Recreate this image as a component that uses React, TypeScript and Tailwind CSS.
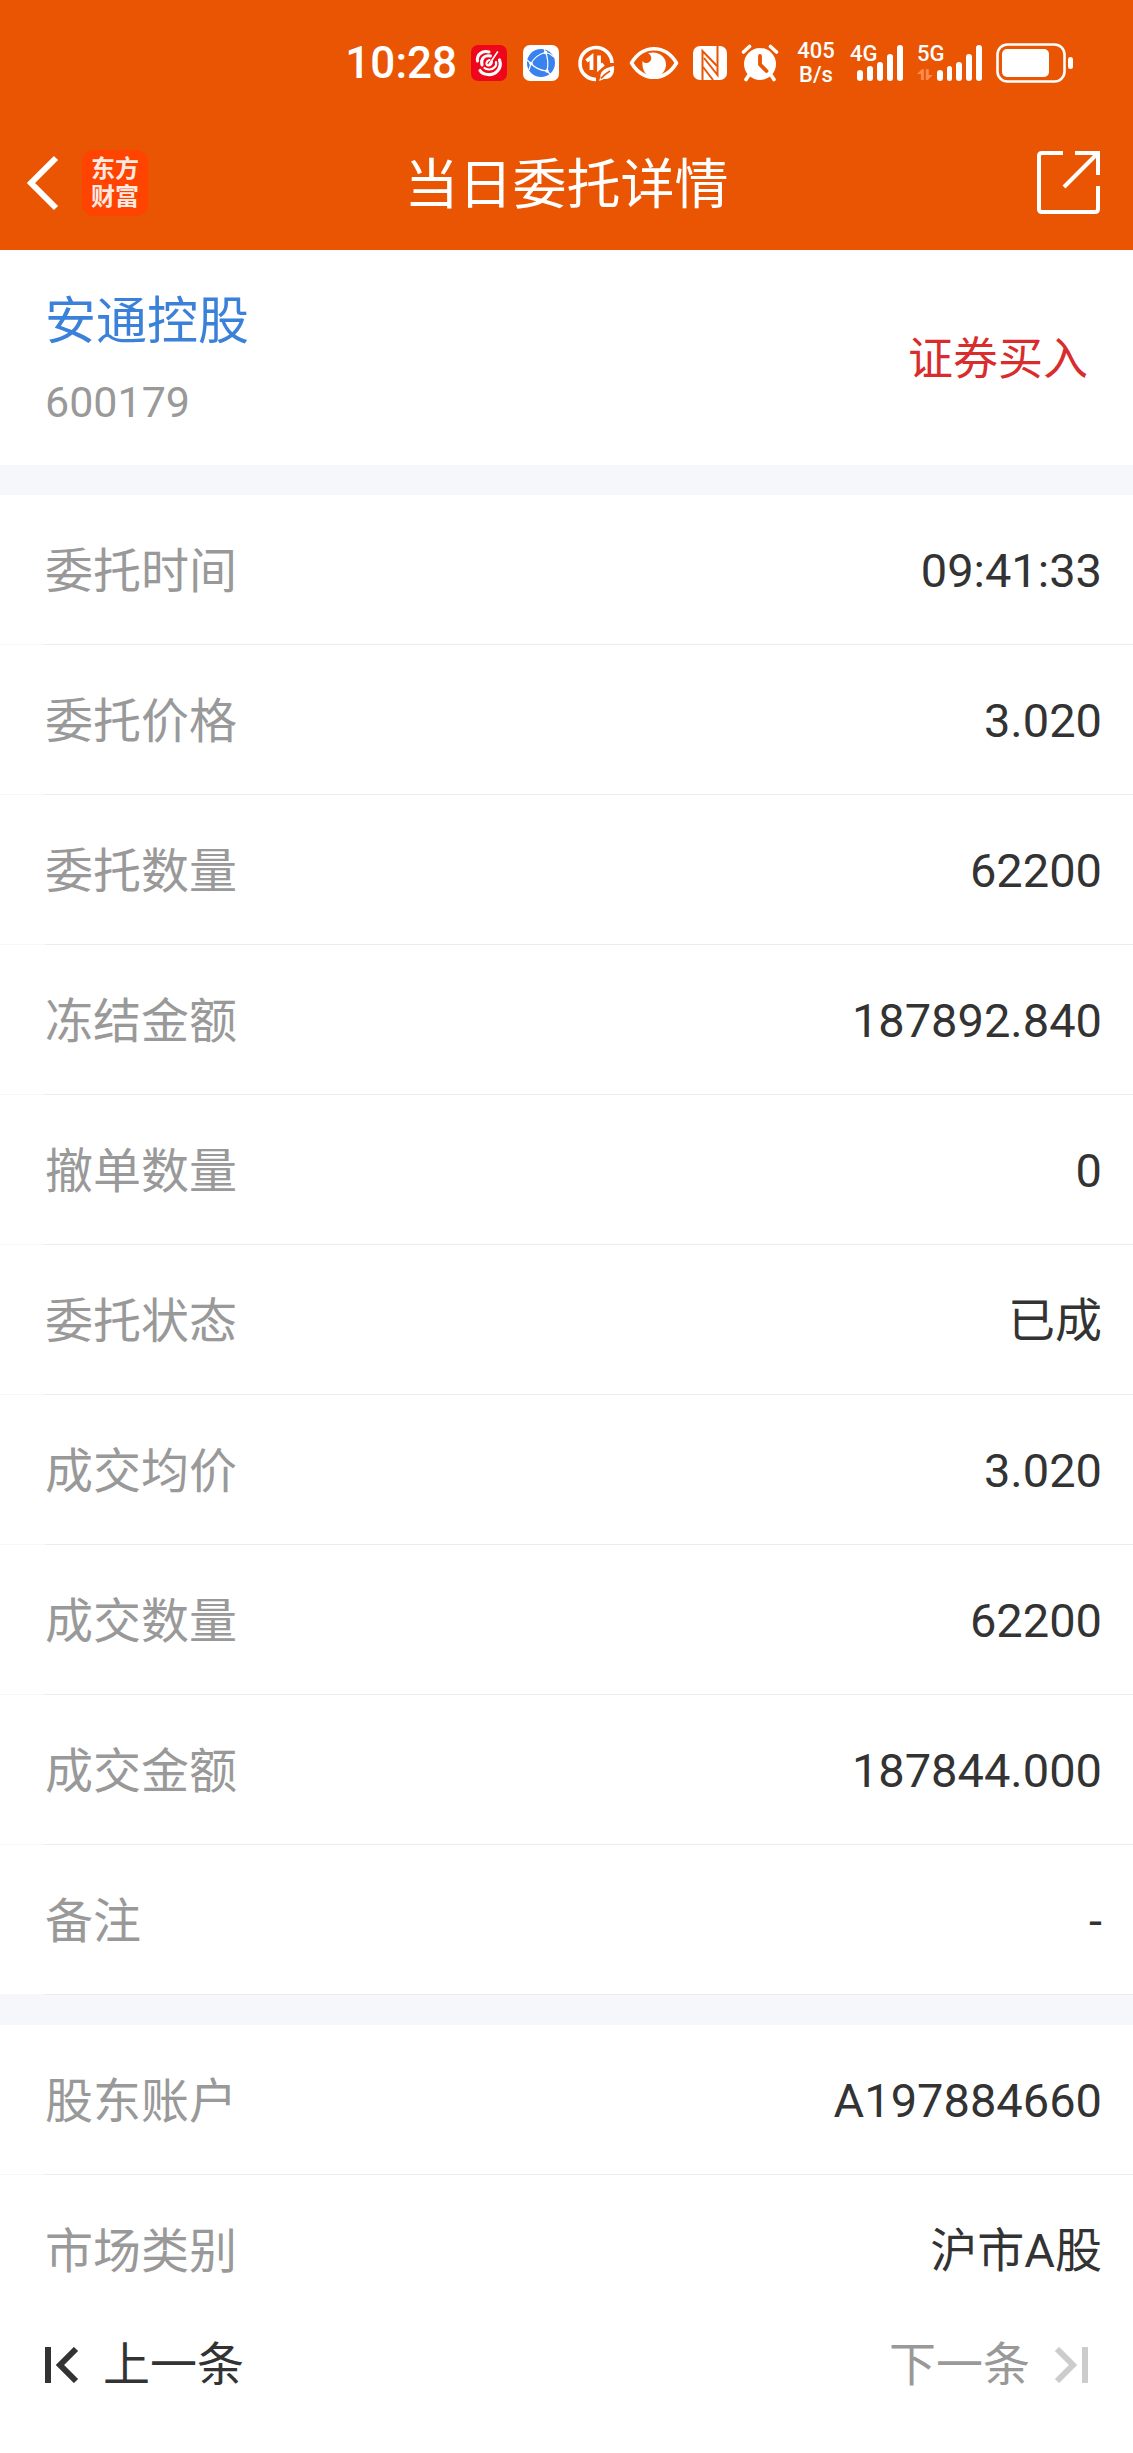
type Row = { label: string; value: string };

const orderRows: Row[] = [
  { label: '委托时间', value: '09:41:33' },
  { label: '委托价格', value: '3.020' },
  { label: '委托数量', value: '62200' },
  { label: '冻结金额', value: '187892.840' },
  { label: '撤单数量', value: '0' },
  { label: '委托状态', value: '已成' },
  { label: '成交均价', value: '3.020' },
  { label: '成交数量', value: '62200' },
  { label: '成交金额', value: '187844.000' },
  { label: '备注', value: '-' },
];

const accountRows: Row[] = [
  { label: '股东账户', value: 'A197884660' },
  { label: '市场类别', value: '沪市A股' },
];

function MusicIcon() {
  return (
    <svg viewBox="0 0 36 36" className="size-9" aria-hidden="true">
      <rect width="36" height="36" rx="7" fill="#f0061c" />
      <g fill="none" stroke="#fff" strokeLinecap="round">
        <path d="M18 7C11 5 5.500 10 6.500 16" strokeWidth="3" />
        <path d="M19.500 11C13 9.500 9.500 14 11 20" strokeWidth="3" />
        <path d="M28.500 15C31.500 23 25 30 17 29.500C13 29.300 10.500 28 9 25.500" strokeWidth="3.200" />
        <path d="M25 17C26 21 22.500 24.800 18 24.500C16 24.400 14.500 24 13.500 23" strokeWidth="2.200" />
        <path d="M26.500 7L18 19.500" strokeWidth="1.600" />
        <path d="M18.500 15C15 16 14.500 20 17 20.500C19.500 20.800 21 18.500 21 16.500" strokeWidth="2" />
      </g>
    </svg>
  );
}

function BrowserIcon() {
  return (
    <svg viewBox="0 0 36 36" className="size-9" aria-hidden="true">
      <rect width="36" height="36" rx="7" fill="#fff" />
      <circle cx="18" cy="18" r="14" fill="#3a82ee" />
      <g fill="none" stroke="#fff" strokeWidth="1.200">
        <path d="M4 15L8 18.500C11 13 16 9 22.500 7.500L21 3" />
        <path d="M22.500 7.500C25 12 25.500 20 24 26L27 29" />
        <path d="M8 18.500C12 23 18 25.500 24 26" />
        <path d="M22.500 7.500C26 8 29 10 31 12" />
        <path d="M8 18.500L6 25" />
      </g>
      <g fill="#fff">
        <circle cx="8" cy="18.500" r="1.800" />
        <circle cx="22.500" cy="7.500" r="1.800" />
        <circle cx="24" cy="26" r="1.800" />
      </g>
    </svg>
  );
}

function DataSaverIcon() {
  return (
    <svg viewBox="0 0 38 38" className="size-[38px]" aria-hidden="true">
      <g fill="none" stroke="#fff">
        <path d="M19 35.500A16 16 0 1 1 35 19" strokeWidth="3.600" />
        <path d="M9.500 17L14.500 13V26" strokeWidth="3.800" />
        <path d="M22 11.500V24L26.500 20" strokeWidth="3.800" />
      </g>
      <path d="M37 22C38 30 34 36 27 35L22 37L23.500 33C22.500 28 28 23.500 37 22Z" fill="#fff" />
      <path d="M24 34.500C27 31 29.500 29 33 27" stroke="#e95503" strokeWidth="1.600" fill="none" />
    </svg>
  );
}

function EyeIcon() {
  return (
    <svg viewBox="0 0 50 36" className="h-9 w-[50px]" aria-hidden="true">
      <path d="M2.500 18C14 -1 36 -1 47.500 18C36 37 14 37 2.500 18Z" fill="none" stroke="#fff" strokeWidth="3.600" strokeLinejoin="round" />
      <path d="M19 8C24 11 23 17 18 18C16 18.300 14.500 17.500 13.500 16C12.500 25 17 32 25 32C32 32 37 26 37 19.500C37 11 29 5.500 19 8Z" fill="#fff" />
    </svg>
  );
}

function NfcIcon() {
  return (
    <svg viewBox="0 0 34 36" className="h-9 w-[34px]" aria-hidden="true">
      <rect y="1" width="34" height="34" rx="7" fill="#fff" />
      <g fill="none" stroke="#e95503" strokeWidth="2">
        <path d="M9.500 36V6L24 21" />
        <path d="M24.500 0V30L11 13" />
        <path d="M10 22L20 35" />
      </g>
    </svg>
  );
}

function AlarmIcon() {
  return (
    <svg viewBox="0 0 38 38" className="size-[38px]" aria-hidden="true">
      <circle cx="19" cy="20" r="16" fill="#fff" />
      <path d="M2.500 8L8.500 2.500M35.500 8L29.500 2.500M8 31L5 35.500M30 31L33 35.500" fill="none" stroke="#fff" strokeWidth="3.600" strokeLinecap="round" />
      <path d="M19 12V20.500L25.500 27" fill="none" stroke="#e95503" strokeWidth="3.800" strokeLinecap="round" strokeLinejoin="round" />
    </svg>
  );
}

function SignalBars() {
  return (
    <>
      <span className="h-[11px] w-[6px] rounded-full bg-white" />
      <span className="h-[15px] w-[6px] rounded-full bg-white" />
      <span className="h-[19px] w-[6px] rounded-full bg-white" />
      <span className="h-[27px] w-[6px] rounded-full bg-white" />
      <span className="h-9 w-[6px] rounded-full bg-white" />
    </>
  );
}

function BatteryIcon() {
  return (
    <svg viewBox="0 0 78 40" className="h-10 w-[78px]" aria-hidden="true">
      <rect x="1.500" y="1.500" width="67" height="37" rx="10" fill="none" stroke="#fff" strokeWidth="2.600" />
      <rect x="6" y="6" width="47" height="28" rx="5" fill="#fff" />
      <rect x="72" y="14" width="5" height="12" rx="2.500" fill="#fff" />
    </svg>
  );
}

function StatusBar() {
  return (
    <div className="flex h-[126px] items-center justify-end gap-[14px] pr-[59px]">
      <span className="text-[44px] leading-none font-medium">10:28</span>
      <div className="flex gap-4 pr-1">
        <MusicIcon />
        <BrowserIcon />
      </div>
      <DataSaverIcon />
      <EyeIcon />
      <NfcIcon />
      <AlarmIcon />
      <span className="flex w-[43px] flex-col items-center pl-[3px] text-[22px] leading-[24px] font-medium">
        <span>405</span>
        <span>B/s</span>
      </span>
      <span className="relative flex h-9 w-[53px] items-end justify-end gap-1">
        <span className="absolute top-0 left-0 text-[22px] leading-[18px] font-medium">4G</span>
        <SignalBars />
      </span>
      <span className="relative flex h-9 w-[65px] items-end justify-end gap-1">
        <span className="absolute top-0 left-0 text-[22px] leading-[18px] font-medium">5G</span>
        <svg viewBox="0 0 16 12" className="h-3 w-4" aria-hidden="true">
          <path d="M0 5L5 0H7V11H4V5ZM9 0H12V6H16L11 11H9Z" fill="#ff8a50" />
        </svg>
        <SignalBars />
      </span>
      <BatteryIcon />
    </div>
  );
}

function NavBar() {
  return (
    <div className="grid h-[124px] grid-cols-[1fr_auto_1fr] items-start px-6 pt-6">
      <div className="flex items-center gap-[22px]">
        <button type="button" aria-label="返回" className="flex w-9 items-center justify-center">
          <svg viewBox="0 0 34 56" className="h-14 w-[34px]" aria-hidden="true">
            <path d="M31 3L6 28L31 53" fill="none" stroke="#fff" strokeWidth="6" />
          </svg>
        </button>
        <span className="flex size-[66px] flex-col items-center justify-center rounded-xl bg-[#ff4300] text-[24px] leading-[28px] font-bold text-[#ffe9e0]">
          <span>东方</span>
          <span>财富</span>
        </span>
      </div>
      <h1 className="text-[54px] leading-[72px]">当日委托详情</h1>
      <button type="button" aria-label="分享" className="mr-2 justify-self-end">
        <svg viewBox="0 0 64 64" className="size-16" aria-hidden="true">
          <path d="M26 3H5Q2 3 2 6V59Q2 62 5 62H58Q61 62 61 59V36M38 3H61V25M61 3L27 37" fill="none" stroke="#fff" strokeWidth="4" />
        </svg>
      </button>
    </div>
  );
}

function RowGroup({ rows }: { rows: Row[] }) {
  return (
    <dl>
      {rows.map((row) => (
        <div key={row.label} className="flex h-[150px] flex-col">
          <div className="flex flex-1 items-center justify-between pt-1 pr-[31px] pl-[45px]">
            <dt className="text-[48px] text-[#999999]">{row.label}</dt>
            <dd className="text-[47px] text-[#333333]">{row.value}</dd>
          </div>
          <div className="bg-[#f7f7f7] pl-[45px]">
            <div className="h-px bg-[#ececec]" />
          </div>
        </div>
      ))}
    </dl>
  );
}

export default function App() {
  return (
    <div className="flex min-h-screen flex-col bg-white font-['Roboto','Noto_Sans_CJK_SC',sans-serif]">
      <header className="bg-[#e95503] text-white">
        <StatusBar />
        <NavBar />
      </header>

      <main>
        <section className="flex h-[215px] items-center justify-between px-[45px]">
          <div className="pt-2">
            <h2 className="text-[51px] leading-[80px] text-[#3b80d9]">安通控股</h2>
            <p className="text-[43px] leading-[80px] text-[#999999]">600179</p>
          </div>
          <span className="pt-1 text-[45px] text-[#d92c2c]">证券买入</span>
        </section>
        <div className="h-[30px] bg-[#f5f7fa]" />
        <RowGroup rows={orderRows} />
        <div className="h-[30px] bg-[#f5f7fa]" />
        <RowGroup rows={accountRows} />
      </main>

      {/* 底部翻页栏，盖住最后一行的分隔线 */}
      <footer className="relative -mt-1 flex items-center justify-between bg-white px-[45px] pt-[6px] text-[47px] leading-[76px]">
        <button type="button" className="flex items-center gap-6 text-[#333333]">
          <svg viewBox="0 0 34 36" className="h-9 w-[34px]" aria-hidden="true">
            <path d="M3 0V36M31 2L15 18L31 34" fill="none" stroke="currentColor" strokeWidth="6" />
          </svg>
          上一条
        </button>
        <button type="button" disabled className="flex items-center gap-6 text-[#999999]">
          下一条
          <svg viewBox="0 0 34 36" className="h-9 w-[34px] text-[#cccccc]" aria-hidden="true">
            <path d="M31 0V36M3 2L19 18L3 34" fill="none" stroke="currentColor" strokeWidth="6" />
          </svg>
        </button>
      </footer>
    </div>
  );
}
